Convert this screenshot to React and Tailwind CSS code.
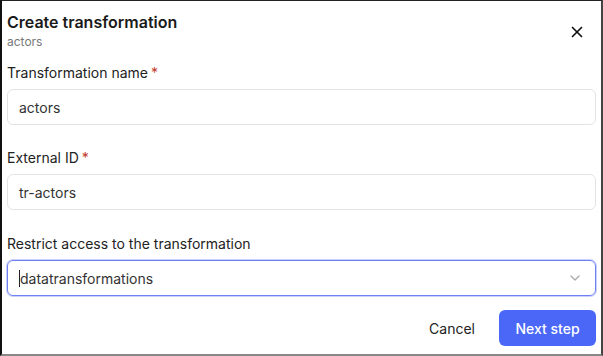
import { ChevronDown, X } from 'lucide-react'

function Label({ children, required }) {
  return (
    <p className="text-[14px] text-[#222] leading-5 mb-[6px]">
      {children}
      {required && <span className="text-[#c0392b] ml-[3px]">*</span>}
    </p>
  )
}

function TextInput({ value }) {
  return (
    <div className="h-[36px] rounded-md border border-[#e3e3e3] flex items-center px-[11px] text-[14px] text-[#333]">
      {value}
    </div>
  )
}

export default function App() {
  return (
    <div
      className="w-[603px] h-[356px] bg-white border-l-2 border-r-2 border-t border-b-2 border-l-[#111] border-r-[#444] border-t-[#222] border-b-[#888] flex flex-col px-[5px]"
      style={{ fontFamily: 'Inter, "Liberation Sans", sans-serif' }}
    >
      <div className="flex items-start justify-between pt-[10px]">
        <div>
          <h1 className="text-[16px] font-semibold text-[#1a1a1a] leading-[22px]">Create transformation</h1>
          <p className="text-[12px] text-[#777] leading-4 mt-[1px]">actors</p>
        </div>
        <button className="mt-[12px] mr-[10px] text-[#111]">
          <X size={18} strokeWidth={2.2} />
        </button>
      </div>

      <div className="mt-[13px]">
        <Label required>Transformation name</Label>
        <TextInput value="actors" />
      </div>

      <div className="mt-[23px]">
        <Label required>External ID</Label>
        <TextInput value="tr-actors" />
      </div>

      <div className="mt-[24px]">
        <Label>Restrict access to the transformation</Label>
        <div className="h-[36px] rounded-md border border-[#6f80f2] ring-1 ring-[#c9d0fb] flex items-center justify-between pl-[11px] pr-[12px] text-[14px] text-[#333]">
          <span className="flex items-center">
            <span className="w-px h-[17px] bg-[#222]" />
            datatransformations
          </span>
          <ChevronDown size={16} className="text-[#aaa]" />
        </div>
      </div>

      <div className="flex items-center justify-end gap-[24px] mt-[14px]">
        <button className="text-[14px] text-[#222]">Cancel</button>
        <button className="h-[36px] w-[97px] rounded-md bg-[#4a67f7] text-white text-[14px] font-medium">
          Next step
        </button>
      </div>
    </div>
  )
}
